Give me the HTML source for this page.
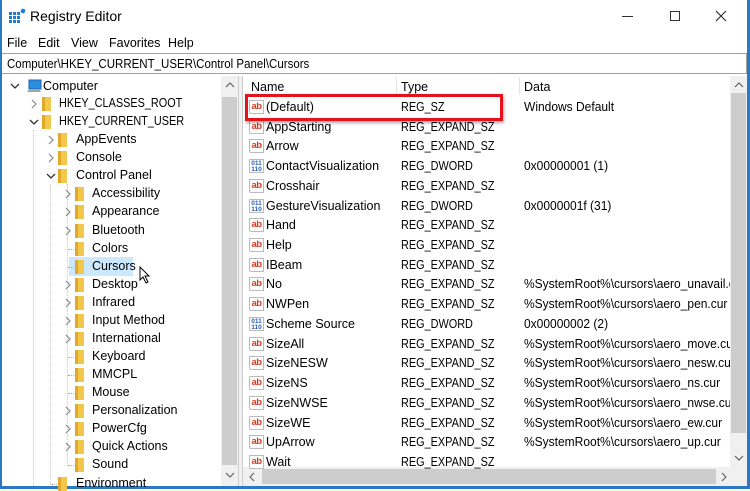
<!DOCTYPE html>
<html><head><meta charset="utf-8"><style>
*{margin:0;padding:0;box-sizing:border-box}
body{width:750px;height:489px;overflow:hidden;background:#fff;font-family:"Liberation Sans",sans-serif;font-size:12.5px;color:#000;position:relative}
.a{position:absolute;white-space:nowrap}
.u{display:inline-block;transform:scaleX(0.87);transform-origin:0 0}
.f{position:absolute;width:9px;height:14px;background:#f3c74b;border-left:3px solid #e0a92a}
.ab{position:absolute;width:15px;height:14px;border:1px solid #bbb;background:#fff;color:#d8391f;font-weight:bold;font-size:9.5px;line-height:11px;text-align:center;letter-spacing:-0.5px;border-bottom-left-radius:2px}
.dw{position:absolute;width:15px;height:14px;border:1px solid #bbb;background:#fff;color:#2a5db0;font-weight:bold;font-size:6.5px;line-height:6px;text-align:center;padding-top:1px}
</style></head><body>
<div class="a" style="left:0;top:0;width:2px;height:489px;background:#2b79c2"></div>
<div class="a" style="left:747px;top:0;width:3px;height:489px;background:#2b79c2"></div>
<div class="a" style="left:0;top:486px;width:750px;height:3px;background:#2b79c2"></div>
<svg class="a" style="left:9px;top:8px" width="17" height="17"><g fill="#1e7bd6"><rect x="0" y="4" width="3" height="3"/><rect x="4" y="4" width="3" height="3"/><rect x="8" y="4" width="3" height="3"/><rect x="0" y="8" width="3" height="3"/><rect x="4" y="8" width="3" height="3"/><rect x="8" y="8" width="3" height="3"/><rect x="0" y="12" width="3" height="3"/><rect x="4" y="12" width="3" height="3"/><rect x="8" y="12" width="3" height="3"/><rect x="12" y="1" width="4" height="4" transform="rotate(20 14 3)"/></g></svg>
<div class="a" style="left:30px;top:8px;font-size:14px">Registry Editor</div>
<div class="a" style="left:622px;top:16px;width:11px;height:1px;background:#333"></div>
<div class="a" style="left:670px;top:11px;width:10px;height:10px;border:1px solid #333"></div>
<svg class="a" style="left:715px;top:10px" width="12" height="12"><path d="M1 1L11 11M11 1L1 11" stroke="#333" stroke-width="1.2"/></svg>
<div class="a" style="left:7px;top:36px">File</div>
<div class="a" style="left:38px;top:36px">Edit</div>
<div class="a" style="left:71px;top:36px">View</div>
<div class="a" style="left:109px;top:36px">Favorites</div>
<div class="a" style="left:168px;top:36px">Help</div>
<div class="a" style="left:2px;top:53px;width:745px;height:21px;border-top:1px solid #a0a0a0;border-bottom:1px solid #a0a0a0;border-right:1px solid #a0a0a0"></div>
<div class="a" style="left:7px;top:57px;transform:scaleX(0.92);transform-origin:0 0">Computer\HKEY_CURRENT_USER\Control Panel\Cursors</div>
<div class="a" style="left:221px;top:76px;width:17px;height:410px;background:#f0f0f0"></div>
<div class="a" style="left:222px;top:97px;width:15px;height:368px;background:#cdcdcd"></div>
<svg class="a" style="left:225px;top:82px" width="10" height="6"><path d="M1 5L5 1L9 5" stroke="#555" fill="none"/></svg>
<svg class="a" style="left:225px;top:472px" width="10" height="6"><path d="M1 1L5 5L9 1" stroke="#555" fill="none"/></svg>
<div class="a" style="left:238px;top:76px;width:5px;height:410px;background:#f0f0f0;border-left:1px solid #ccc;border-right:1px solid #ccc"></div>
<div class="a" style="left:33px;top:130px;width:0;height:356px;border-left:1px dotted #ccc"></div>
<div class="a" style="left:50px;top:184px;width:0;height:300px;border-left:1px dotted #ccc"></div>
<div class="a" style="left:67px;top:184px;width:0;height:282px;border-left:1px dotted #ccc"></div>
<svg class="a" style="left:26px;top:79px" width="16" height="15"><rect x="3" y="1" width="12" height="9" fill="#2a8fe0" stroke="#1a66b0"/><path d="M1 13 L15 13 L13 10 L3 10 Z" fill="#9aa"/></svg>
<svg class="a" style="left:10px;top:83px" width="10" height="6"><path d="M1 1L5 5L9 1" stroke="#333" fill="none" stroke-width="1.3"/></svg>
<div class="a" style="left:43px;top:79px">Computer</div>
<div class="a" style="left:69px;top:257px;width:64px;height:19px;background:#cce8ff"></div>
<div id="tree"></div>
<script>
var rows=[[1,'HKEY_CLASSES_ROOT','>'],[1,'HKEY_CURRENT_USER','v'],[2,'AppEvents','>'],[2,'Console','>'],[2,'Control Panel','v'],[3,'Accessibility','>'],[3,'Appearance','>'],[3,'Bluetooth','>'],[3,'Colors',''],[3,'Cursors',''],[3,'Desktop','>'],[3,'Infrared','>'],[3,'Input Method','>'],[3,'International','>'],[3,'Keyboard',''],[3,'MMCPL',''],[3,'Mouse',''],[3,'Personalization','>'],[3,'PowerCfg','>'],[3,'Quick Actions','>'],[3,'Sound',''],[2,'Environment','']];
var h='';
rows.forEach(function(r,i){var c=Math.round(86+(i+1)*18.07);var L=r[0];var cx=[0,28,45,62][L];var fx=[0,42,58,75][L];var tx=[0,59,76,92][L];
if(r[2]=='>')h+='<svg class="a" style="left:'+(cx+3)+'px;top:'+(c-5)+'px" width="6" height="10"><path d="M1 1L5 5L1 9" stroke="#888" fill="none" stroke-width="1.2"/></svg>';
else if(r[2]=='v')h+='<svg class="a" style="left:'+(cx+1)+'px;top:'+(c-3)+'px" width="10" height="6"><path d="M1 1L5 5L9 1" stroke="#333" fill="none" stroke-width="1.3"/></svg>';
else h+='<div class="a" style="left:'+(cx+6)+'px;top:'+c+'px;width:6px;border-top:1px dotted #aaa"></div>';
h+='<div class="f" style="left:'+fx+'px;top:'+(c-7)+'px"></div>';
var t=r[1].indexOf('HKEY')==0?'<span class="u">'+r[1]+'</span>':r[1];
h+='<div class="a" style="left:'+tx+'px;top:'+(c-8)+'px;z-index:2">'+t+'</div>';});
document.getElementById('tree').innerHTML=h;
</script>
<svg class="a" style="left:139px;top:266px;z-index:3" width="12" height="18"><path d="M1 1 L1 14 L4 11 L7 17 L9 16 L6 10 L10 10 Z" fill="#fff" stroke="#000" stroke-width="1"/></svg>
<div class="a" style="left:396px;top:77px;width:1px;height:18px;background:#e5e5e5"></div>
<div class="a" style="left:519px;top:77px;width:1px;height:18px;background:#e5e5e5"></div>
<div class="a" style="left:251px;top:80px">Name</div>
<div class="a" style="left:401px;top:80px">Type</div>
<div class="a" style="left:524px;top:80px">Data</div>
<div class="a" style="left:730px;top:76px;width:17px;height:391px;background:#f0f0f0"></div>
<div class="a" style="left:731px;top:93px;width:15px;height:340px;background:#cdcdcd"></div>
<svg class="a" style="left:734px;top:82px" width="10" height="6"><path d="M1 5L5 1L9 5" stroke="#555" fill="none"/></svg>
<svg class="a" style="left:734px;top:455px" width="10" height="6"><path d="M1 1L5 5L9 1" stroke="#555" fill="none"/></svg>
<div class="a" style="left:243px;top:467px;width:504px;height:19px;background:#f0f0f0"></div>
<div class="a" style="left:262px;top:469px;width:454px;height:15px;background:#cdcdcd"></div>
<svg class="a" style="left:249px;top:472px" width="6" height="10"><path d="M5 1L1 5L5 9" stroke="#555" fill="none"/></svg>
<svg class="a" style="left:721px;top:472px" width="6" height="10"><path d="M1 1L5 5L1 9" stroke="#555" fill="none"/></svg>
<div id="list"></div>
<script>
var L=[['(Default)','REG_SZ','Windows Default','s'],['AppStarting','REG_EXPAND_SZ','','s'],['Arrow','REG_EXPAND_SZ','','s'],['ContactVisualization','REG_DWORD','0x00000001 (1)','d'],['Crosshair','REG_EXPAND_SZ','','s'],['GestureVisualization','REG_DWORD','0x0000001f (31)','d'],['Hand','REG_EXPAND_SZ','','s'],['Help','REG_EXPAND_SZ','','s'],['IBeam','REG_EXPAND_SZ','','s'],['No','REG_EXPAND_SZ','%SystemRoot%\\cursors\\aero_unavail.cur','s'],['NWPen','REG_EXPAND_SZ','%SystemRoot%\\cursors\\aero_pen.cur','s'],['Scheme Source','REG_DWORD','0x00000002 (2)','d'],['SizeAll','REG_EXPAND_SZ','%SystemRoot%\\cursors\\aero_move.cur','s'],['SizeNESW','REG_EXPAND_SZ','%SystemRoot%\\cursors\\aero_nesw.cur','s'],['SizeNS','REG_EXPAND_SZ','%SystemRoot%\\cursors\\aero_ns.cur','s'],['SizeNWSE','REG_EXPAND_SZ','%SystemRoot%\\cursors\\aero_nwse.cur','s'],['SizeWE','REG_EXPAND_SZ','%SystemRoot%\\cursors\\aero_ew.cur','s'],['UpArrow','REG_EXPAND_SZ','%SystemRoot%\\cursors\\aero_up.cur','s'],['Wait','REG_EXPAND_SZ','','s']];
var h='';
L.forEach(function(r,i){var c=107+i*19.72;
h+=(r[3]=='s'?'<div class="ab" style="left:249px;top:'+(c-7)+'px">ab</div>':'<div class="dw" style="left:249px;top:'+(c-7)+'px">011<br>110</div>');
h+='<div class="a" style="left:266px;top:'+(c-7)+'px">'+r[0]+'</div>';
h+='<div class="a" style="left:401px;top:'+(c-7)+'px"><span class="u">'+r[1]+'</span></div>';
h+='<div class="a" style="left:524px;top:'+(c-7)+'px;width:206px;overflow:hidden"><span style="display:inline-block;transform:scaleX(0.96);transform-origin:0 0">'+r[2]+'</span></div>';});
document.getElementById('list').innerHTML=h;
</script>
<div class="a" style="left:245px;top:94px;width:258px;height:27px;border:3px solid #e3121b;box-shadow:1px 2px 3px rgba(0,0,0,.35)"></div>
</body></html>
